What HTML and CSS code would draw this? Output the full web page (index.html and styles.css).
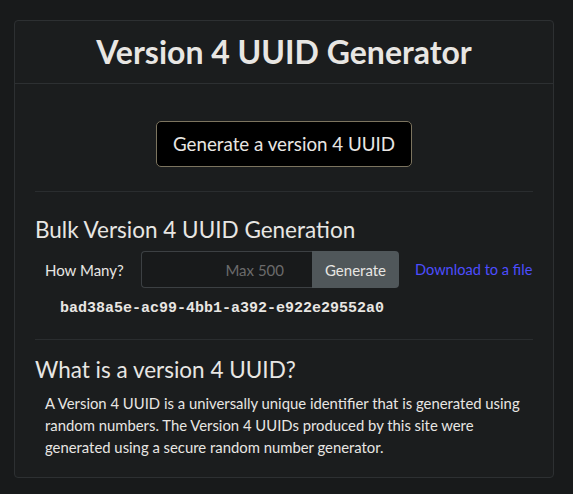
FILE: index.html
```html
<!DOCTYPE html>
<html lang="en">
<head>
<meta charset="utf-8">
<title>Version 4 UUID Generator</title>
<link rel="stylesheet" href="styles.css">
</head>
<body>
<div class="page">
  <div class="card">
    <div class="card-header">
      <h1 class="title">Version 4 UUID Generator</h1>
    </div>
    <div class="card-body">
      <div class="single">
        <button class="btn-main" type="button">Generate a version 4 UUID</button>
      </div>
      <hr class="sep">
      <section class="bulk">
        <h2 class="section-title">Bulk Version 4 UUID Generation</h2>
        <div class="bulk-row">
          <span class="label">How Many?</span>
          <div class="input-group">
            <input class="count" type="text" placeholder="Max 500">
            <button class="btn-gen" type="button">Generate</button>
          </div>
          <a class="download" href="#">Download to a file</a>
        </div>
        <div class="uuid">bad38a5e-ac99-4bb1-a392-e922e29552a0</div>
      </section>
      <hr class="sep sep-2">
      <section class="about">
        <h2 class="section-title">What is a version 4 UUID?</h2>
        <p class="about-text">A Version 4 UUID is a universally unique identifier that is generated using random numbers. The Version 4 UUIDs produced by this site were generated using a secure random number generator.</p>
      </section>
    </div>
  </div>
</div>
</body>
</html>
```

FILE: styles.css
```css
* { box-sizing: border-box; }
html, body {
  margin: 0;
  background: #181a1b;
  color: #e8e6e3;
  font-family: Lato, "Open Sans", sans-serif;
}
.page {
  padding: 20px 0 0 14px;
}
.card {
  width: 540px;
  height: 458px;
  border: 1px solid #2d3032;
  border-radius: 4px;
  background: #1b1d1e;
}
.card-header {
  padding: 12px 20px;
  border-bottom: 1px solid #2d3032;
}
.title {
  margin: 0;
  font-size: 32px;
  line-height: 1.2;
  font-weight: 700;
  text-align: center;
  color: #e8e6e3;
}
.card-body {
  padding: 20px 20px;
}
.single {
  display: flex;
  justify-content: center;
  padding-top: 17px;
}
.btn-main {
  font-family: Lato, sans-serif;
  font-size: 18.75px;
  line-height: 1.5;
  color: #e8e6e3;
  background: #000;
  border: 1px solid #7c745f;
  border-radius: 5px;
  padding: 6px 16px;
  height: 46px;
}
.sep {
  border: 0;
  border-top: 1px solid #2a2d2f;
  margin: 24px 0 0;
}
.sep-2 {
  margin-top: 20px;
}
.section-title {
  margin: 0;
  font-size: 22.5px;
  font-weight: 400;
  line-height: 1.2;
  color: #e8e6e3;
}
.bulk .section-title {
  margin-top: 24px;
}
.bulk-row {
  display: flex;
  align-items: center;
  margin-top: 8px;
  padding-left: 10px;
}
.label {
  flex: 0 0 96px;
  font-size: 15px;
}
.input-group {
  display: flex;
  flex: 0 0 auto;
  height: 37px;
}
.count {
  width: 171px;
  height: 37px;
  background: #181a1b;
  border: 1px solid #3c4043;
  border-right: 0;
  border-radius: 4px 0 0 4px;
  text-align: right;
  padding: 0 28px 0 8px;
  font-family: Lato, sans-serif;
  font-size: 15px;
  color: #e8e6e3;
  outline: none;
}
.count::placeholder {
  color: #6b6b6b;
}
.btn-gen {
  width: 87px;
  height: 37px;
  background: #50575a;
  color: #e8e6e3;
  border: 0;
  border-radius: 0 4px 4px 0;
  font-family: Lato, sans-serif;
  font-size: 15px;
  padding: 0;
}
.download {
  margin-left: 16px;
  font-size: 14.6px;
  color: #4d4dff;
  text-decoration: none;
  white-space: nowrap;
}
.uuid {
  margin: 11px 0 0 25px;
  font-family: "Liberation Mono", monospace;
  font-weight: 700;
  font-size: 15px;
  line-height: 20px;
  color: #e8e6e3;
}
.about .section-title {
  margin-top: 16px;
}
.about-text {
  margin: 9px 0 0 10px;
  font-size: 14.85px;
  line-height: 22px;
  color: #e8e6e3;
}
```
